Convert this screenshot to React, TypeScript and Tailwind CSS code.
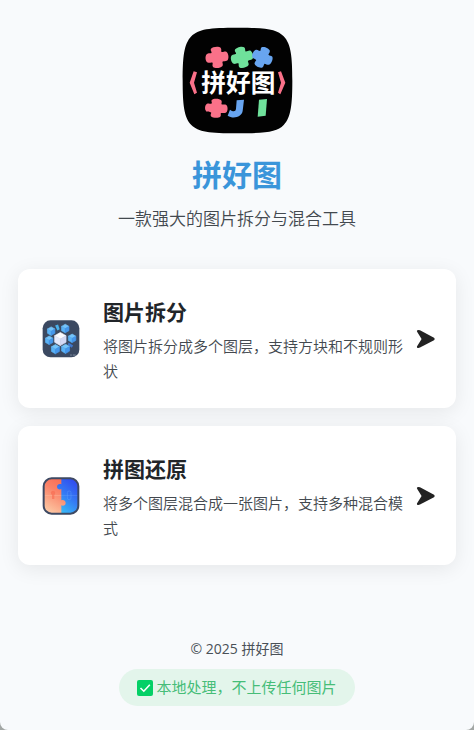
import type { ReactNode } from 'react';

const PIECE =
  'M-14 -15 C-13 -19 -17 -22 -15 -27 C-10 -34 8 -34 13 -28 C16 -22 13 -20 14 -15 C20 -13 22 -17 28 -14 C34 -8 34 8 28 13 C22 16 19 13 14 15 C13 20 16 22 13 28 C8 34 -9 34 -14 28 C-17 22 -13 19 -14 15 C-20 13 -22 16 -28 13 C-34 8 -34 -8 -28 -13 C-22 -17 -19 -13 -14 -15 Z';

function Logo() {
  return (
    <svg className="h-[107px] w-[111px]" viewBox="37 21 333 321" role="img" aria-label="拼好图">
      <path
        d="M204 23 C290 23 322 27 342 49 C364 72 368 110 368 182 C368 254 364 292 342 315 C322 336 290 340 204 340 C118 340 86 336 65 315 C43 292 39 254 39 182 C39 110 43 72 65 49 C86 27 118 23 204 23 Z"
        fill="#020202"
      />
      <path d={PIECE} fill="#fa7189" transform="translate(142 112) rotate(-6) scale(1.06 .98)" />
      <path d={PIECE} fill="#6fe19b" transform="translate(217 112) rotate(-14) scale(1.04 .98)" />
      <path d={PIECE} fill="#68a5f0" transform="translate(278 112) rotate(24) scale(.96 .98)" />
      <path d={PIECE} fill="#fa7189" transform="translate(140 265) rotate(4) scale(1.04 .88)" />
      <path d="M201 241 L223 239 L219 273 C216 291 191 298 174 287 L181 269 C191 276 198 275 199 266 Z" fill="#68a5f0" />
      <path d="M268 239 L292 237 L288 287 L264 290 Z" fill="#6fe19b" />
      <path d="M72 154 L82 157 L73 188 L82 218 L74 223 L60 188 Z" fill="#fa7189" />
      <path d="M334 154 L325 157 L334 188 L325 218 L332 223 L347 188 Z" fill="#fa7189" />
      <text
        x="206"
        y="217"
        textAnchor="middle"
        fill="#fff"
        fontSize="74"
        fontWeight="700"
        fontFamily="'Noto Sans CJK SC', sans-serif"
      >
        拼好图
      </text>
    </svg>
  );
}

function Cube({ x, y, r, light }: { x: number; y: number; r: number; light?: boolean }) {
  const w = r * 0.87;
  const h = r / 2;
  const [top, left, right] = light ? ['#fafaff', '#e6e9fb', '#d3d9f5'] : ['#74c4fa', '#5ab2f6', '#4597ec'];
  return (
    <g transform={`translate(${x} ${y})`} strokeLinejoin="round" strokeWidth="2">
      <path d={`M0 ${-r} L${w} ${-h} L0 0 L${-w} ${-h} Z`} fill={top} stroke={top} />
      <path d={`M${-w} ${-h} L0 0 V${r} L${-w} ${h} Z`} fill={left} stroke={left} />
      <path d={`M${w} ${-h} L0 0 V${r} L${w} ${h} Z`} fill={right} stroke={right} />
    </g>
  );
}

function SplitIcon() {
  return (
    <svg className="size-[38px] shrink-0" viewBox="98 179 114 116" aria-hidden="true">
      <rect x="99" y="180" width="112" height="113" rx="24" fill="#3b4961" />
      <path d="M137 196 L146 193 L151 207 L144 211 Z" fill="#4ab2ec" />
      <path d="M178 248 L192 257 L188 264 L176 255 Z" fill="#3f78cf" />
      <Cube x={125} y={213} r={13} />
      <Cube x={168} y={205} r={13} />
      <Cube x={119} y={241} r={13} />
      <Cube x={189} y={235} r={13} />
      <Cube x={138} y={268} r={14} />
      <Cube x={169} y={267} r={14} />
      <Cube x={153} y={237} r={20} light />
      <path d="M183 286 h5 m3 0 h9" stroke="#a9b3c4" strokeWidth="2" />
    </svg>
  );
}

function MergeIcon() {
  return (
    <svg className="size-[38px] shrink-0" viewBox="97 168 114 114" aria-hidden="true">
      <defs>
        <linearGradient id="warm" x1="0.8" y1="0" x2="0.2" y2="1">
          <stop offset="0" stopColor="#fb6148" />
          <stop offset="0.45" stopColor="#fa8268" />
          <stop offset="1" stopColor="#fccba6" />
        </linearGradient>
        <linearGradient id="cool" x1="0.7" y1="0" x2="0.2" y2="1">
          <stop offset="0" stopColor="#3048ee" />
          <stop offset="0.5" stopColor="#357bf4" />
          <stop offset="1" stopColor="#38c1f8" />
        </linearGradient>
        <clipPath id="tile">
          <rect x="103" y="173" width="102" height="104" rx="23" />
        </clipPath>
      </defs>
      <g clipPath="url(#tile)">
        <rect x="100" y="170" width="108" height="110" fill="url(#warm)" />
        <path
          d="M155 170 V190 C149 187 142 191 142 197 C142 204 149 207 155 204 V238 C161 235 168 239 168 246 C168 253 161 256 155 253 V280 H210 V170 Z"
          fill="url(#cool)"
        />
        <path d="M103 223 H155" stroke="#ffd0b5" strokeWidth="2" opacity=".5" />
        <path d="M155 223 H205" stroke="#7eb7ff" strokeWidth="2" opacity=".4" />
        <path d="M127 234 V222 C121 216 124 210 130 210 C137 210 139 216 134 222 V234 Z" fill="#f9694f" opacity=".6" />
        <rect x="173" y="210" width="11" height="26" rx="5" fill="none" stroke="#66a8fb" strokeWidth="2" opacity=".5" />
      </g>
      <rect x="102" y="172" width="104" height="106" rx="24" fill="none" stroke="#3e4963" strokeWidth="6" />
    </svg>
  );
}

function ToolCard({ icon, title, text }: { icon: ReactNode; title: string; text: string }) {
  return (
    <a
      href="#"
      className="flex items-center rounded-xl bg-white py-6 pr-5 pl-6 shadow-[0_4px_20px_rgba(0,0,0,0.08)]"
    >
      {icon}
      <div className="ml-[23px] min-w-0 flex-1">
        <h2 className="mb-[2px] text-[21px] leading-[39px] font-bold text-[#212529]">{title}</h2>
        <p className="text-[15px] leading-[25px] font-[350] text-[#43494f]">{text}</p>
      </div>
      <svg className="h-5 w-5 shrink-0" viewBox="0 0 20 20" aria-hidden="true">
        <path d="M1 1.5 Q2 .4 4 1.3 L18 8.7 Q19.6 10 18 11.2 L4 18.6 Q2 19.4 1 18.4 Q.7 17.6 1.4 16.8 L5.6 10 L1.4 3.2 Q.6 2.2 1 1.5 Z" fill="#222" />
      </svg>
    </a>
  );
}

export default function App() {
  return (
    <div className="bg-[#a3a7a5] font-['Open_Sans','Noto_Sans_CJK_SC',sans-serif]">
      <div className="flex min-h-screen flex-col rounded-b-lg bg-[#f8fafc] px-[18px] pt-[27px] pb-6">
        <header className="flex flex-col items-center text-center">
          <Logo />
          <h1 className="mt-4 text-[30px] leading-[49px] font-bold text-[#3a95da]">拼好图</h1>
          <p className="mt-[6px] text-[17px] leading-7 font-[350] text-[#43494f]">一款强大的图片拆分与混合工具</p>
        </header>

        <main className="mt-9 flex flex-col gap-[18px]">
          <ToolCard icon={<SplitIcon />} title="图片拆分" text="将图片拆分成多个图层，支持方块和不规则形状" />
          <ToolCard icon={<MergeIcon />} title="拼图还原" text="将多个图层混合成一张图片，支持多种混合模式" />
        </main>

        <footer className="mt-auto flex flex-col items-center gap-2">
          <p className="text-[14px] leading-6 text-[#495057]">© 2025 拼好图</p>
          <p className="flex items-center gap-[3px] rounded-full bg-[#e3f5eb] px-[18px] py-[6px] text-[15px] leading-[25px] text-[#46bd78]">
            <svg className="h-4 w-4" viewBox="0 0 16 16" aria-hidden="true">
              <rect width="16" height="16" rx="2" fill="#04d066" />
              <path d="M3.5 8 L6.8 11.2 L12.8 4.8" fill="none" stroke="#fff" strokeWidth="1.6" />
            </svg>
            本地处理，不上传任何图片
          </p>
        </footer>
      </div>
    </div>
  );
}
